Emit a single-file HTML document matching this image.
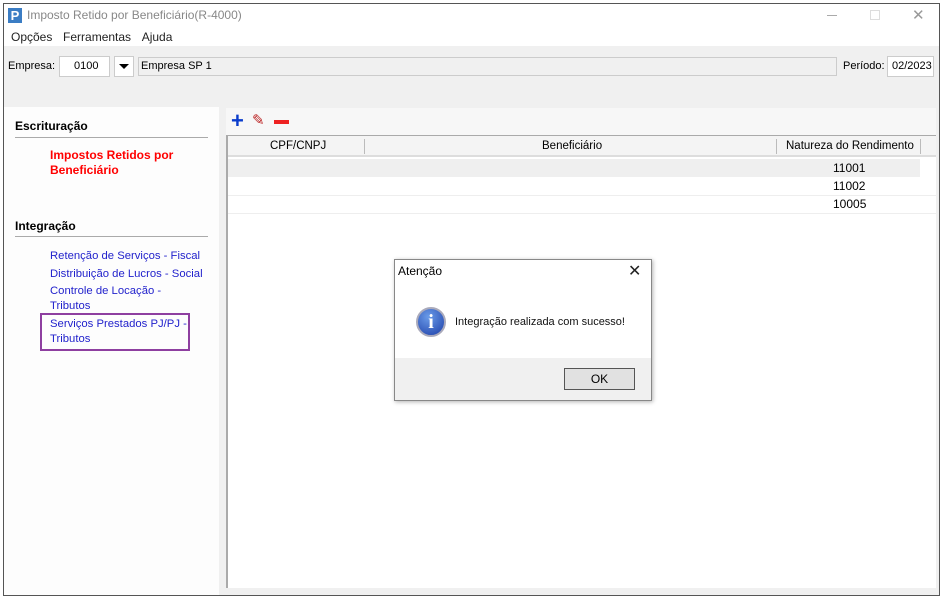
<!DOCTYPE html>
<html><head><meta charset="utf-8"><style>
*{margin:0;padding:0;box-sizing:border-box}
body{width:947px;height:602px;background:#fff;font-family:"Liberation Sans",sans-serif;font-size:12px;position:relative;overflow:hidden;color:#000}
.a{position:absolute}
</style></head><body>
<div class="a" style="left:3px;top:3px;width:937px;height:593px;border:1px solid #555;background:#f0f0f0"></div>
<div class="a" style="left:4px;top:4px;width:935px;height:42px;background:#fff"></div>
<div class="a" style="left:8px;top:8px;width:14px;height:15px;background:#3b7dc4;color:#fff;font-weight:bold;font-size:13px;line-height:15px;text-align:center">P</div>
<div class="a" style="left:27px;top:8px;color:#888;font-size:12px">Imposto Retido por Beneficiário(R-4000)</div>
<div class="a" style="left:827px;top:15px;width:10px;height:1px;background:#aaa"></div>
<div class="a" style="left:870px;top:10px;width:10px;height:10px;border:1px solid #ddd"></div>
<div class="a" style="left:912px;top:6px;color:#999;font-size:15px">✕</div>
<div class="a" style="left:11px;top:30px;color:#222;font-size:12px;word-spacing:2px">Opções&nbsp;&nbsp;Ferramentas&nbsp;&nbsp;Ajuda</div>
<div class="a" style="left:8px;top:60px;font-size:11px">Empresa:</div>
<div class="a" style="left:59px;top:56px;width:51px;height:21px;background:#fff;border:1px solid #ccc;font-size:11px;line-height:19px;padding-left:14px">0100</div>
<div class="a" style="left:114px;top:56px;width:20px;height:21px;background:#fff;border:1px solid #ccc"></div>
<div class="a" style="left:119px;top:64px;border-left:5px solid transparent;border-right:5px solid transparent;border-top:5px solid #000"></div>
<div class="a" style="left:138px;top:57px;width:699px;height:19px;border:1px solid #ccc;font-size:11px;line-height:17px;padding-left:2px">Empresa SP 1</div>
<div class="a" style="left:843px;top:60px;font-size:11px">Período:</div>
<div class="a" style="left:887px;top:56px;width:47px;height:21px;background:#fff;border:1px solid #ccc;font-size:11px;line-height:19px;padding-left:4px">02/2023</div>
<div class="a" style="left:4px;top:107px;width:215px;height:488px;background:#fdfdfd"></div>
<div class="a" style="left:15px;top:119px;font-weight:bold;font-size:12px">Escrituração</div>
<div class="a" style="left:15px;top:137px;width:193px;height:1px;background:#aaa"></div>
<div class="a" style="left:50px;top:148px;color:#f00;font-weight:bold;font-size:12px;line-height:15px">Impostos Retidos por<br>Beneficiário</div>
<div class="a" style="left:15px;top:219px;font-weight:bold;font-size:12px">Integração</div>
<div class="a" style="left:15px;top:236px;width:193px;height:1px;background:#aaa"></div>
<div class="a" style="left:50px;top:247px;color:#22c;font-size:11.3px;line-height:18px">Retenção de Serviços - Fiscal<br>Distribuição de Lucros - Social</div>
<div class="a" style="left:50px;top:284px;color:#22c;font-size:11.3px;line-height:14.5px">Controle de Locação -<br>Tributos</div>
<div class="a" style="left:40px;top:313px;width:150px;height:38px;border:2px solid #8e3fa0"></div>
<div class="a" style="left:50px;top:317px;color:#22c;font-size:11.3px;line-height:14.5px">Serviços Prestados PJ/PJ -<br>Tributos</div>
<div class="a" style="left:226px;top:108px;width:710px;height:27px;background:#f7f7f7"></div>
<div class="a" style="left:231px;top:109px;color:#0a3ccc;font-size:22px;font-weight:bold;line-height:24px">+</div>
<div class="a" style="left:252px;top:112px;color:#b22;font-size:15px;line-height:18px">✎</div>
<div class="a" style="left:274px;top:120px;width:15px;height:4px;background:#e22"></div>
<div class="a" style="left:226px;top:135px;width:710px;height:453px;background:#fff;border-left:2px solid #aaa;border-top:1px solid #aaa"></div>
<div class="a" style="left:228px;top:136px;width:708px;height:21px;background:#f4f4f4;border-bottom:2px solid #ddd;font-size:11.5px;line-height:20px">
<span class="a" style="left:42px">CPF/CNPJ</span><span class="a" style="left:136px;top:3px;width:1px;height:15px;background:#bbb"></span>
<span class="a" style="left:314px">Beneficiário</span><span class="a" style="left:548px;top:3px;width:1px;height:15px;background:#bbb"></span>
<span class="a" style="left:558px">Natureza do Rendimento</span><span class="a" style="left:692px;top:3px;width:1px;height:15px;background:#bbb"></span></div>
<div class="a" style="left:228px;top:159px;width:692px;height:18px;background:#efefef"></div>
<div class="a" style="left:228px;top:195px;width:708px;height:1px;background:#eee"></div>
<div class="a" style="left:228px;top:213px;width:708px;height:1px;background:#eee"></div>
<div class="a" style="left:833px;top:159px;font-size:12px;line-height:18px">11001<br>11002<br>10005</div>
<div class="a" style="left:394px;top:259px;width:258px;height:142px;border:1px solid #888;background:#fff;box-shadow:1px 1px 4px rgba(0,0,0,.3)"></div>
<div class="a" style="left:398px;top:264px;font-size:12px">Atenção</div>
<div class="a" style="left:628px;top:261px;font-size:16px;color:#222">✕</div>
<div class="a" style="left:416px;top:307px;width:30px;height:30px;border-radius:50%;background:radial-gradient(circle at 40% 30%,#6a9be8,#1d3fa8);border:2px solid #aab;color:#fff;font-family:'Liberation Serif',serif;font-weight:bold;font-size:20px;text-align:center;line-height:26px">i</div>
<div class="a" style="left:455px;top:316px;font-size:11px;color:#111">Integração realizada com sucesso!</div>
<div class="a" style="left:395px;top:358px;width:256px;height:42px;background:#f0f0f0"></div>
<div class="a" style="left:564px;top:368px;width:71px;height:22px;border:1px solid #555;background:#e1e1e1;font-size:12px;text-align:center;line-height:20px">OK</div>
</body></html>
